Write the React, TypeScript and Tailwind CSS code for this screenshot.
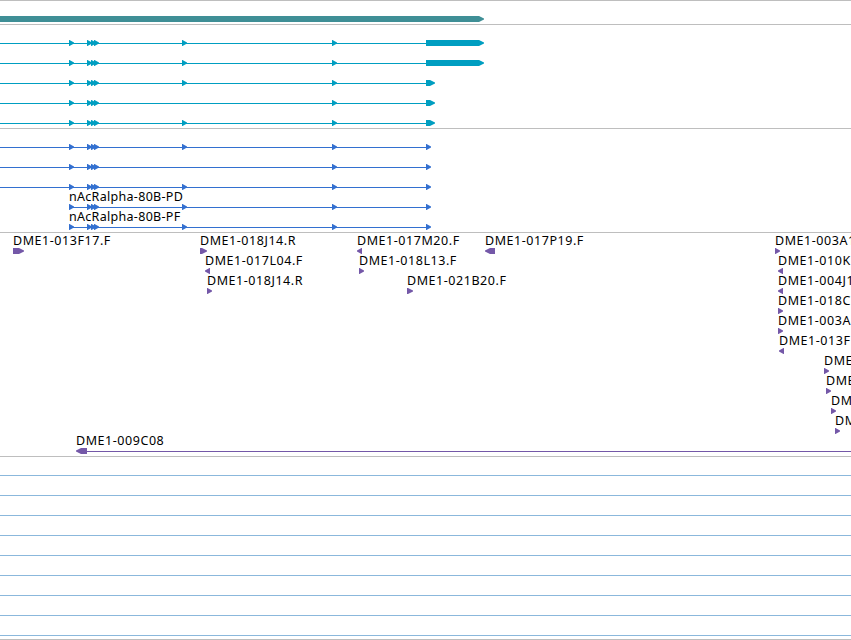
type Direction = 'left' | 'right';

type Feature = {
  start: number;
  end: number;
  direction?: Direction;
  label?: string;
};

type Row = {
  features: Feature[];
  // Thin connector drawn behind the features
  line?: [number, number];
  label?: string;
};

const EXONS: Feature[] = [
  { start: 69, end: 74 },
  { start: 87, end: 92 },
  { start: 91, end: 96 },
  { start: 94, end: 99 },
  { start: 182, end: 187 },
  { start: 332, end: 337 },
];

const SHORT_EXONS = EXONS.filter((exon) => exon.start !== 182);

const geneRows: Row[] = [{ features: [{ start: -10, end: 484 }] }];

const transcriptRows: Row[] = [
  { line: [0, 426], features: [...EXONS, { start: 426, end: 484 }] },
  { line: [0, 426], features: [...EXONS, { start: 426, end: 484 }] },
  { line: [0, 426], features: [...EXONS, { start: 426, end: 435 }] },
  { line: [0, 426], features: [...SHORT_EXONS, { start: 426, end: 435 }] },
  { line: [0, 426], features: [...EXONS, { start: 426, end: 435 }] },
];

const proteinRows: Row[] = [
  { line: [0, 426], features: [...EXONS, { start: 426, end: 431 }] },
  { line: [0, 426], features: [...SHORT_EXONS, { start: 426, end: 431 }] },
  { line: [0, 426], features: [...EXONS, { start: 426, end: 431 }] },
  { line: [69, 426], label: 'nAcRalpha-80B-PD', features: [...EXONS, { start: 426, end: 431 }] },
  { line: [69, 426], label: 'nAcRalpha-80B-PF', features: [...EXONS, { start: 426, end: 431 }] },
];

const cloneRows: Row[] = [
  {
    features: [
      { start: 13, end: 24, label: 'DME1-013F17.F' },
      { start: 200, end: 207, label: 'DME1-018J14.R' },
      { start: 357, end: 362, direction: 'left', label: 'DME1-017M20.F' },
      { start: 485, end: 495, direction: 'left', label: 'DME1-017P19.F' },
      { start: 775, end: 780, label: 'DME1-003A1' },
    ],
  },
  {
    features: [
      { start: 205, end: 210, direction: 'left', label: 'DME1-017L04.F' },
      { start: 359, end: 364, label: 'DME1-018L13.F' },
      { start: 778, end: 783, direction: 'left', label: 'DME1-010K' },
    ],
  },
  {
    features: [
      { start: 207, end: 212, label: 'DME1-018J14.R' },
      { start: 407, end: 413, label: 'DME1-021B20.F' },
      { start: 778, end: 783, direction: 'left', label: 'DME1-004J1' },
    ],
  },
  { features: [{ start: 778, end: 783, label: 'DME1-018C' }] },
  { features: [{ start: 778, end: 783, label: 'DME1-003A' }] },
  { features: [{ start: 779, end: 784, direction: 'left', label: 'DME1-013F' }] },
  { features: [{ start: 824, end: 829, label: 'DME' }] },
  { features: [{ start: 826, end: 831, label: 'DME' }] },
  { features: [{ start: 831, end: 836, label: 'DM' }] },
  { features: [{ start: 835, end: 840, label: 'DM' }] },
  {
    line: [87, 851],
    features: [{ start: 76, end: 87, direction: 'left', label: 'DME1-009C08' }],
  },
];

const alignmentRows: Row[] = Array.from({ length: 9 }, () => ({ line: [0, 851], features: [] }));

// Block with a slightly blunt tip on the side it points to
function arrowPoints({ start, end, direction = 'right' }: Feature) {
  const tip = end - start > 5 ? 5 : 4.5;
  if (direction === 'left') {
    return `${end},12 ${start + tip},12 ${start},14.5 ${start},15.5 ${start + tip},18 ${end},18`;
  }
  return `${start},12 ${end - tip},12 ${end},14.5 ${end},15.5 ${end - tip},18 ${start},18`;
}

function Label({ x, text }: { x: number; text: string }) {
  return (
    <text x={x} y={9} className="fill-black">
      {text}
    </text>
  );
}

function TrackRow({ row }: { row: Row }) {
  return (
    <svg width={851} height={20} className="block shrink-0 overflow-visible fill-current">
      {row.line && <rect x={row.line[0]} y={15} width={row.line[1] - row.line[0]} height={1} />}
      {row.features.map((feature) => (
        <polygon key={feature.start} points={arrowPoints(feature)} />
      ))}
      {row.label && row.line && <Label x={row.line[0]} text={row.label} />}
      {row.features.map(
        (feature) => feature.label && <Label key={feature.start} x={feature.start} text={feature.label} />
      )}
    </svg>
  );
}

function Track({ rows, className }: { rows: Row[]; className: string }) {
  return (
    <section className={`flex flex-col border-t border-[#bebebe] pt-[3px] ${className}`}>
      {rows.map((row, index) => (
        <TrackRow key={index} row={row} />
      ))}
    </section>
  );
}

export default function App() {
  return (
    <main className="h-[640px] w-[851px] overflow-hidden bg-white font-['Noto_Sans','DejaVu_Sans',sans-serif] text-[12.5px]">
      <Track rows={geneRows} className="text-[#3f8f96]" />
      <Track rows={transcriptRows} className="text-[#009ec1]" />
      <Track rows={proteinRows} className="tracking-[0.3px] text-[#3370d0]" />
      <Track rows={cloneRows} className="tracking-[0.55px] text-[#7458a8]" />
      <Track rows={alignmentRows} className="h-[183px] text-[#8bb8dc]" />
      <div className="border-t border-[#bebebe]" />
    </main>
  );
}
